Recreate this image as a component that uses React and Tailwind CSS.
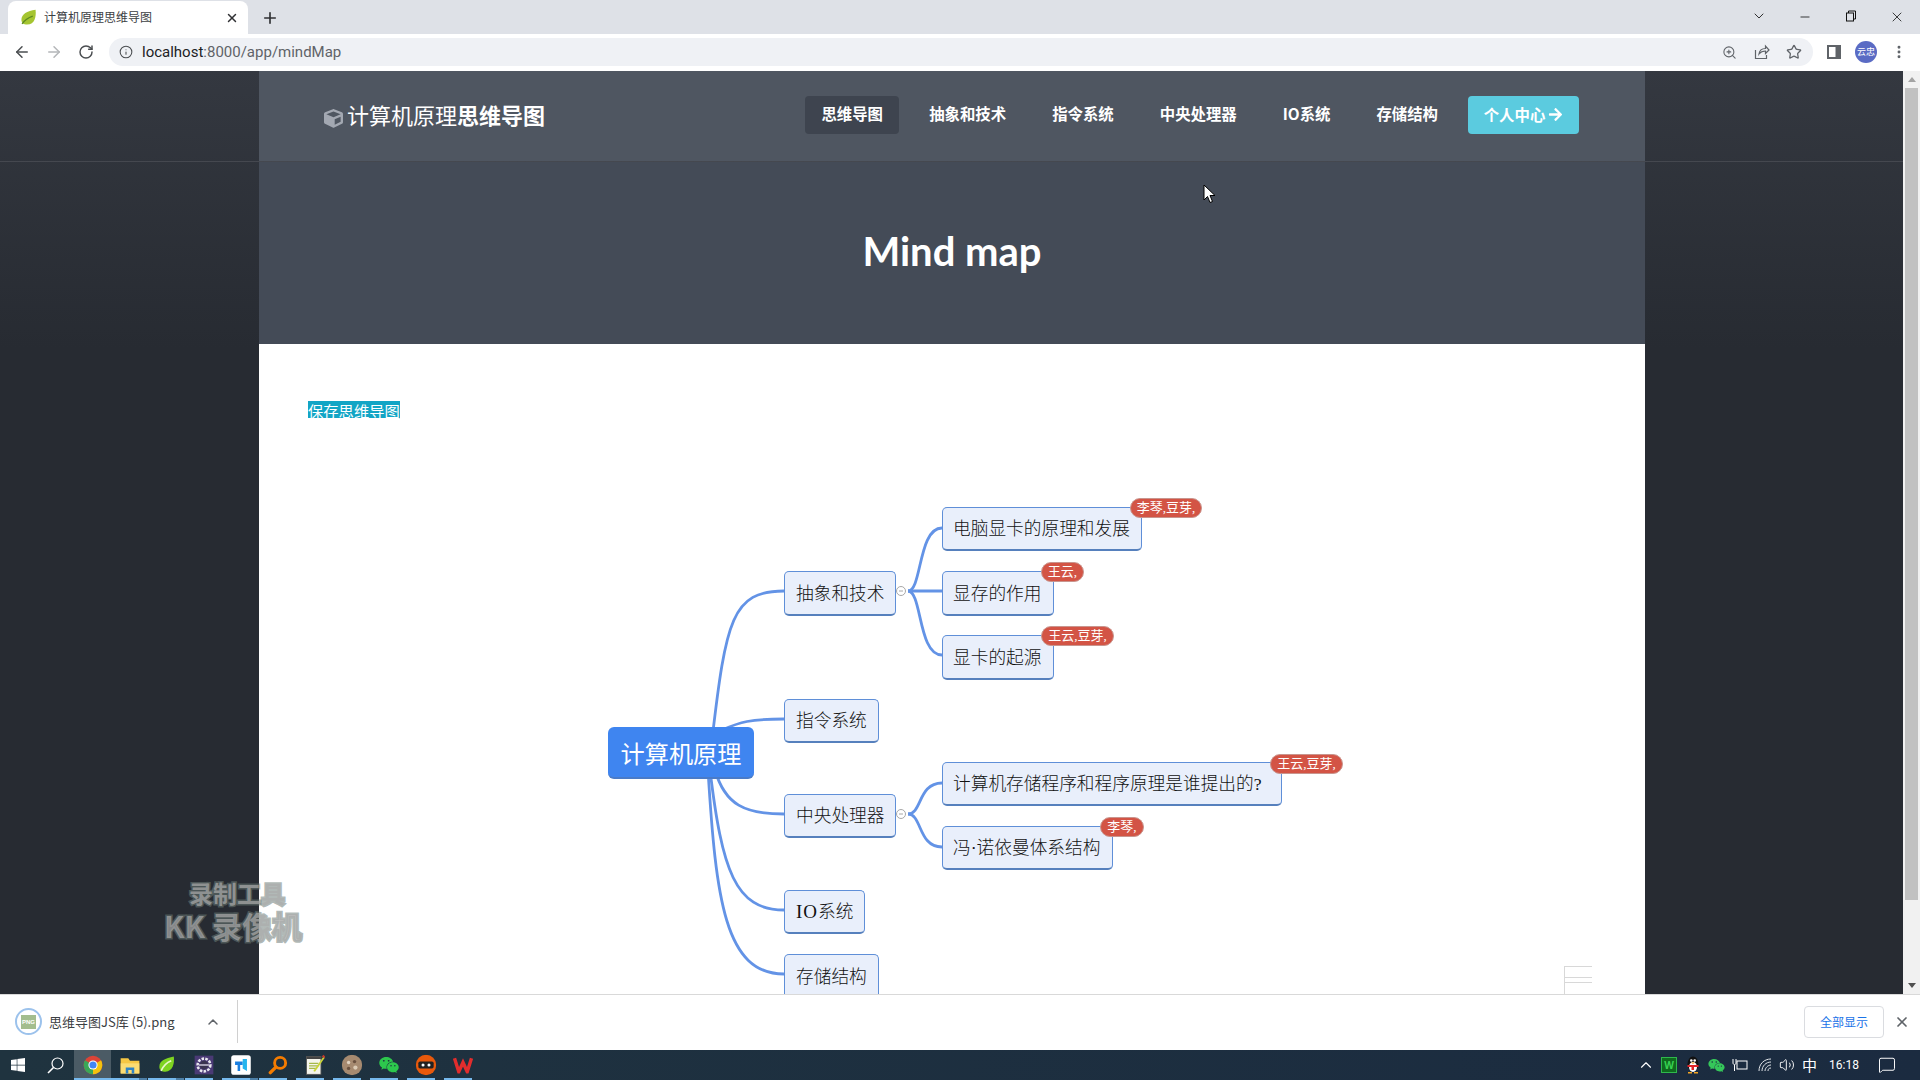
import { ArrowLeft, ArrowRight, RotateCw, Info, ZoomIn, Star, MoreVertical, ChevronDown, ChevronUp, Minus, X, Plus, Volume2, MessageSquare } from 'lucide-react'
import { FaCube, FaArrowRight, FaWindows, FaWeixin } from 'react-icons/fa'

const cjk = 'font-["Noto_Sans_CJK_SC","Noto_Sans",sans-serif]'

const navItems = ['抽象和技术', '指令系统', '中央处理器', 'IO系统', '存储结构']

const nodes = [
    { text: '抽象和技术', pos: 'left-[525px] top-[131px] w-[112px] h-[45px] pl-[11px]' },
    { text: '指令系统', pos: 'left-[525px] top-[259px] w-[95px] h-[44px] pl-[11px]' },
    { text: '中央处理器', pos: 'left-[525px] top-[354px] w-[112px] h-[44px] pl-[11px]' },
    { text: <><span className="text-[19px] tracking-[1px]">IO</span>系统</>, pos: 'left-[525px] top-[450px] w-[81px] h-[44px] pl-[11px]' },
    { text: '存储结构', pos: 'left-[525px] top-[514px] w-[95px] h-[45px] pl-[11px]' },
    { text: '电脑显卡的原理和发展', pos: 'left-[683px] top-[67px] w-[200px] h-[44px] pl-[10px]' },
    { text: '显存的作用', pos: 'left-[683px] top-[131px] w-[112px] h-[45px] pl-[10px]' },
    { text: '显卡的起源', pos: 'left-[683px] top-[195px] w-[112px] h-[45px] pl-[10px]' },
    { text: '计算机存储程序和程序原理是谁提出的?', pos: 'left-[683px] top-[322px] w-[340px] h-[44px] pl-[10px]' },
    { text: '冯·诺依曼体系结构', pos: 'left-[683px] top-[386px] w-[171px] h-[44px] pl-[10px]' },
]

const badges = [
    { text: '李琴,豆芽,', pos: 'left-[871px] top-[58px] w-[72px]' },
    { text: '王云,', pos: 'left-[782px] top-[122px] w-[43px]' },
    { text: '王云,豆芽,', pos: 'left-[782px] top-[186px] w-[73px]' },
    { text: '王云,豆芽,', pos: 'left-[1011px] top-[314px] w-[73px]' },
    { text: '李琴,', pos: 'left-[841px] top-[377px] w-[44px]' },
]

function ChromeLogo() {
    return (
        <svg width="24" height="24" viewBox="0 0 24 24">
            <circle cx="12" cy="12" r="11" fill="#db4437" />
            <path d="M12 12 L21.5 6.5 A11 11 0 0 1 12 23 Z" fill="#f4c20d" />
            <path d="M12 12 L12 23 A11 11 0 0 1 2.5 6.5 Z" fill="#3aa757" />
            <circle cx="12" cy="12" r="5.4" fill="#fff" />
            <circle cx="12" cy="12" r="4.2" fill="#4285f4" />
        </svg>
    )
}

const taskApps = [
    { active: true, icon: <ChromeLogo /> },
    {
        split: true,
        icon: (
            <svg width="24" height="22" viewBox="0 0 24 22">
                <path d="M1 3h9l2 3h11v15H1z" fill="#f6c744" />
                <path d="M1 9h22v12H1z" fill="#fbdc73" />
                <path d="M7 14h10v7h-3v-4h-4v4H7z" fill="#2f83c5" />
            </svg>
        ),
    },
    {
        split: true,
        icon: (
            <svg width="24" height="24" viewBox="0 0 24 24">
                <path d="M3 14C3 7 10 4 20 2c1 8-1 17-10 18-4 0-7-2-7-6z" fill="#7ed321" />
                <path d="M5 19C8 12 12 9 17 7" stroke="#e9f7c9" strokeWidth="2" fill="none" />
            </svg>
        ),
    },
    {
        icon: (
            <svg width="24" height="24" viewBox="0 0 24 24">
                <rect x="1" y="1" width="22" height="22" fill="#4a3a75" />
                <circle cx="12" cy="12" r="7.5" fill="none" stroke="#e8e8ee" strokeWidth="3" strokeDasharray="3 1.5" />
                <circle cx="12" cy="12" r="5" fill="#3a3350" />
                <rect x="6" y="11" width="12" height="2" fill="#b9b3c9" />
            </svg>
        ),
    },
    {
        split: true,
        icon: (
            <svg width="24" height="24" viewBox="0 0 24 24">
                <rect x="0.5" y="0.5" width="23" height="23" rx="3" fill="#fff" />
                <path d="M5 8h9v4h-3v7H8v-7H5z" fill="#1a7fe0" />
                <path d="M14 5h5v14l-5-3z" fill="#25b5ee" />
            </svg>
        ),
    },
    {
        icon: (
            <svg width="24" height="24" viewBox="0 0 24 24" fill="none">
                <circle cx="14.5" cy="9.5" r="6.5" stroke="#f57c00" strokeWidth="3.4" />
                <path d="M9.5 14.5L3 21" stroke="#f57c00" strokeWidth="4" strokeLinecap="round" />
            </svg>
        ),
    },
    {
        icon: (
            <svg width="24" height="26" viewBox="0 0 24 26">
                <rect x="2" y="3" width="17" height="21" fill="#f4f4ec" stroke="#555" />
                <path d="M2 3h17v3H2z" fill="#444" />
                <path d="M5 11h11M5 14h11M5 17h8" stroke="#a5b84a" strokeWidth="1.5" />
                <path d="M10 20L22 3l1.5 1.5L12 21z" fill="#c9d43a" />
                <path d="M20 3l2-2 2 2-1 2z" fill="#c0392b" />
            </svg>
        ),
    },
    {
        icon: (
            <svg width="24" height="24" viewBox="0 0 24 24">
                <circle cx="12" cy="12" r="12" fill="#a68a70" />
                <circle cx="8" cy="9" r="2" fill="#e0d2c0" />
                <circle cx="15" cy="8" r="2" fill="#6b5240" />
                <circle cx="16" cy="15" r="2.5" fill="#dccbb5" />
                <circle cx="8" cy="16" r="2" fill="#6b5240" />
            </svg>
        ),
    },
    { icon: <FaWeixin size={24} color="#2dc84d" /> },
    {
        icon: (
            <svg width="24" height="24" viewBox="0 0 24 24">
                <circle cx="12" cy="12" r="12" fill="#e8590c" />
                <rect x="3" y="8" width="18" height="8" rx="2" fill="#222" />
                <circle cx="8.5" cy="12" r="1.8" fill="#fff" />
                <circle cx="15.5" cy="12" r="1.8" fill="#fff" />
            </svg>
        ),
    },
    {
        icon: (
            <svg width="24" height="20" viewBox="0 0 24 20" fill="none">
                <path d="M2 2l5 16 5-11 5 11 5-16" stroke="#e22d2d" strokeWidth="4" />
            </svg>
        ),
    },
]

function BrowserChrome() {
    return (
        <div className="shrink-0 text-[#5f6368]">
            {/* Tab strip */}
            <div className="h-[34px] bg-[#dee1e7] flex items-end pl-[8px]">
                <div className="w-[240px] h-[33px] bg-white rounded-t-lg flex items-center pl-[12px] pr-[9px]">
                    <svg width="17" height="17" viewBox="0 0 24 24">
                        <path d="M2 15C2 7 10 3 22 1c1 10-1 21-12 21-5 0-8-3-8-7z" fill="#a5c531" />
                        <path d="M3 21C7 15 12 12 18 10" stroke="#5c8a20" strokeWidth="2" fill="none" />
                    </svg>
                    <span className={`ml-[7px] mb-[1px] text-[12px] text-[#3c4043] ${cjk}`}>计算机原理思维导图</span>
                    <X size={14} strokeWidth={2.5} className="ml-auto text-[#303134]" />
                </div>
                <Plus size={18} strokeWidth={2.2} className="ml-[13px] mb-[7px] text-[#303134]" />
                <ChevronDown size={16} strokeWidth={1.4} className="ml-auto mb-[10px] text-[#222]" />
                <div className="w-[46px] flex justify-center ml-[15px] mb-[10px]"><Minus size={14} strokeWidth={1.4} className="text-[#111]" /></div>
                <div className="w-[46px] flex justify-center mb-[12px]">
                    <svg width="12" height="12" viewBox="0 0 12 12" fill="none" stroke="#111">
                        <rect x="1.5" y="3" width="7" height="8" />
                        <path d="M3.5 3V1h7v8H8.5" />
                    </svg>
                </div>
                <div className="w-[46px] flex justify-center mb-[9px]"><X size={16} strokeWidth={1.2} className="text-[#111]" /></div>
            </div>
            {/* Toolbar */}
            <div className="h-[37px] bg-white flex items-center pl-[13px] pb-[1px]">
                <ArrowLeft size={18} strokeWidth={2} className="text-[#4a4d50]" />
                <ArrowRight size={18} strokeWidth={2} className="ml-[14px] text-[#b4b6b9]" />
                <RotateCw size={16} strokeWidth={2.2} className="ml-[15px] text-[#4a4d50]" />
                <div className="ml-[15px] w-[1704px] h-[28px] rounded-full bg-[#eff1f5] flex items-center pl-[10px] pr-[11px]">
                    <Info size={14} strokeWidth={1.8} className="text-[#4a4d50]" />
                    <span className="ml-[9px] text-[15px] text-[#5f6368] font-['Roboto',sans-serif]">
                        <span className="text-[#202124]">localhost</span>:8000/app/mindMap
                    </span>
                    <ZoomIn size={15} strokeWidth={1.7} className="ml-auto mr-[17px] text-[#5f6368]" />
                    <svg width="16" height="16" viewBox="0 0 16 16" fill="none" stroke="#5f6368" strokeWidth="1.2" className="mr-[16px]">
                        <path d="M1.5 6v8.5h11V11" />
                        <path d="M5 10c.5-4 3-5.500 6.500-5.500V2L15 6l-3.500 3.500V7C8.500 7 6.500 8 5 10z" />
                    </svg>
                    <Star size={16} strokeWidth={1.9} className="text-[#5f6368]" />
                </div>
                <svg width="14" height="14" viewBox="0 0 14 14" className="ml-[14px]">
                    <rect x="0" y="0" width="14" height="14" fill="#5f6368" />
                    <rect x="2" y="2" width="6.500" height="10" fill="#fff" />
                </svg>
                <div className={`ml-[14px] w-[22px] h-[22px] rounded-full bg-[#5a6bc4] text-white text-[9px] flex items-center justify-center ${cjk}`}>云忠</div>
                <MoreVertical size={16} strokeWidth={2.4} className="ml-[14px] text-[#5f6368]" />
            </div>
        </div>
    )
}

function NavBar() {
    return (
        <div className="h-[91px] shrink-0 border-b border-white/10">
            <div className={`ml-[259px] w-[1386px] h-full bg-[#4f5661] flex items-start text-white ${cjk}`}>
                <div className="ml-[65px] mt-[20px] flex items-center h-[52px]">
                    <FaCube size={19} className="text-[#a3a8b2] mt-[2px]" />
                    <span className="ml-[4px] mb-[7px] text-[22px] leading-none font-normal">计算机原理<span className="font-bold">思维导图</span></span>
                </div>
                <nav className="ml-auto mr-[66px] mt-[25px] flex items-center gap-[14px] text-[15.4px] font-bold">
                    <a className="h-[38px] w-[94px] pb-[2px] rounded bg-[#3e444f] flex items-center justify-center">思维导图</a>
                    {navItems.map((item) => (
                        <a key={item} className="h-[38px] px-4 pb-[2px] flex items-center">{item}</a>
                    ))}
                    <button className="h-[38px] w-[111px] pb-[1px] rounded bg-[#5bcbdf] flex items-center justify-center gap-[3px] font-bold">
                        个人中心 <FaArrowRight size={15} />
                    </button>
                </nav>
            </div>
        </div>
    )
}

function MindMap() {
    return (
        <div className="relative h-[554px] overflow-hidden">
            <svg viewBox="259 440 1386 554" className="absolute inset-0 w-full h-full" fill="none" stroke="#6393e6" strokeWidth="2.8">
                <path d="M712 740C726 620 732 591 784 591" />
                <path d="M722 730C740 722 750 719 784 719" />
                <path d="M715 770C725 805 745 814 784 814" />
                <path d="M710 770C722 870 735 910 784 910" />
                <path d="M708 770C716 900 725 974 784 974" />
                <path d="M908 591C922 591 918 528 942 528" />
                <path d="M908 591H942" />
                <path d="M908 591C922 591 918 655 942 655" />
                <path d="M908 814C922 814 918 783 942 783" />
                <path d="M908 814C922 814 918 847 942 847" />
                <g stroke="#a8a8a8" strokeWidth="1" fill="#fff">
                    <circle cx="901" cy="591" r="4.500" />
                    <circle cx="901" cy="814" r="4.500" />
                    <path d="M899 591h4M899 814h4" />
                </g>
            </svg>
            <div className="absolute left-[349px] top-[287px] w-[146px] h-[52px] pt-[6px] rounded-md bg-[#3f85f0] border-b-2 border-[#4a7bc8] text-white text-[24.2px] flex items-center justify-center font-['Liberation_Serif','Noto_Sans_CJK_SC',serif]">
                计算机原理
            </div>
            {nodes.map((n) => (
                <div key={n.pos} className={`absolute ${n.pos} rounded-[5px] bg-[#e9effb] border border-[#5f8fd8] border-b-2 border-b-[#5680bd] pt-[2px] flex items-center text-[17.7px] font-light text-[#111] font-['Liberation_Serif','Noto_Sans_CJK_SC',serif]`}>
                    <span>{n.text}</span>
                </div>
            ))}
            {badges.map((b) => (
                <div key={b.pos} className={`absolute ${b.pos} h-[20px] rounded-full bg-[#d35445] border border-[#c9958e] text-white text-[13px] flex items-center justify-center font-['Liberation_Serif','Noto_Sans_CJK_SC',serif]`}>
                    {b.text}
                </div>
            ))}
        </div>
    )
}

function Page() {
    return (
        <div className="relative flex-1 h-full flex flex-col overflow-hidden bg-linear-to-b from-[#343840] to-[#272b32] to-[30%]">
            <NavBar />
            <div className="ml-[259px] w-[1386px] h-[182px] shrink-0 bg-[#444b57] flex justify-center pt-[59px]">
                <h1 className="text-[40px] leading-[60px] font-bold text-white font-['Lato',sans-serif]">Mind map</h1>
            </div>
            <div className="relative ml-[259px] w-[1386px] flex-1 bg-white">
                <div className="h-[96px] pl-[49px] pt-[57px]">
                    <a className={`block w-fit h-[18px] pt-[1px] leading-[16px] text-[15.3px] text-white underline bg-[#12a5c5] ${cjk}`}>保存思维导图</a>
                </div>
                <MindMap />
                {/* minimap widget, bottom right */}
                <div className="absolute left-[1305px] bottom-0 w-[28px] h-[28px] border-l border-t border-[#d8d8d8] flex flex-col justify-between">
                    <div className="h-[11px] border-b border-[#d8d8d8]" />
                    <div className="h-[12px] border-t border-[#d8d8d8]" />
                </div>
            </div>
            {/* recorder watermark */}
            <div className={`absolute left-[163px] top-[807px] w-[140px] flex flex-col items-center font-bold text-[#acacac]/70 [paint-order:stroke] [-webkit-text-stroke:3px_rgba(110,125,120,0.55)] ${cjk}`}>
                <span className="ml-[8px] text-[24px] leading-[30px]">录制工具</span>
                <span className="text-[30px] leading-[34px] whitespace-nowrap">KK 录像机</span>
            </div>
            {/* mouse pointer */}
            <svg width="13" height="20" viewBox="0 0 13 20" className="absolute left-[1203px] top-[113px]">
                <path d="M1 1v15l3.500-3.500 2.500 6 2.500-1-2.500-6h5z" fill="#fff" stroke="#000" />
            </svg>
        </div>
    )
}

function Scrollbar() {
    return (
        <div className="w-[17px] h-full shrink-0 bg-[#f1f1f1] flex flex-col items-center">
            <div className="h-[17px] flex items-center justify-center">
                <div className="w-0 h-0 border-x-[4px] border-x-transparent border-b-[5px] border-b-[#a3a3a3]" />
            </div>
            <div className="w-[13px] h-[812px] bg-[#c1c1c1]" />
            <div className="mt-auto h-[17px] flex items-center justify-center">
                <div className="w-0 h-0 border-x-[4px] border-x-transparent border-t-[5px] border-t-[#505050]" />
            </div>
        </div>
    )
}

function DownloadShelf() {
    return (
        <div className={`h-[56px] shrink-0 bg-white border-t border-[#d9d9d9] flex items-center pb-[2px] ${cjk}`}>
            <div className="ml-[15px] w-[27px] h-[27px] rounded-full border-2 border-[#9cc2ec] flex items-center justify-center">
                <div className="w-[15px] h-[14px] bg-[#a3bd8e] text-white text-[6px] font-bold leading-[14px] text-center font-['Liberation_Sans',sans-serif]">PNG</div>
            </div>
            <span className="ml-[7px] text-[13px] text-[#3c4043]">思维导图JS库 (5).png</span>
            <ChevronUp size={16} strokeWidth={2.2} className="ml-[30px] text-[#5f6368]" />
            <div className="ml-[16px] w-px h-[43px] bg-[#d0d0d0]" />
            <button className="ml-auto w-[80px] h-[32px] rounded border border-[#dadce0] text-[12px] text-[#1a73e8]">全部显示</button>
            <X size={16} strokeWidth={2.6} className="ml-[10px] mr-[10px] text-[#5f6368]" />
        </div>
    )
}

function Penguin() {
    return (
        <svg width="16" height="18" viewBox="0 0 16 18">
            <ellipse cx="8" cy="8" rx="5.500" ry="7.500" fill="#111" />
            <ellipse cx="8" cy="11" rx="4" ry="5" fill="#fff" />
            <circle cx="6.300" cy="4.500" r="1.300" fill="#fff" />
            <circle cx="9.700" cy="4.500" r="1.300" fill="#fff" />
            <path d="M6 6.500h4L8 8z" fill="#f5a623" />
            <path d="M2.500 9h11v2H9v3H6.500v-3h-4z" fill="#e0262a" />
            <path d="M3 16h4v1.500H3zM9 16h4v1.500H9z" fill="#f5a623" />
        </svg>
    )
}

function Taskbar() {
    return (
        <div className="h-[30px] shrink-0 bg-linear-to-r from-[#1f333f] to-[#1b2b40] flex items-center text-white">
            <div className="w-[36px] flex justify-center"><FaWindows size={16} /></div>
            <div className="w-[38px] flex justify-center">
                <svg width="17" height="17" viewBox="0 0 17 17" fill="none" stroke="#fff" strokeWidth="1.200">
                    <circle cx="10.500" cy="6.500" r="5.500" />
                    <path d="M6.500 10.500L1 16" strokeWidth="1.600" />
                </svg>
            </div>
            {taskApps.map((app, i) => (
                <div key={i} className={`relative w-[37px] h-full flex items-center justify-center ${app.active ? 'bg-white/20' : ''}`}>
                    <div className="scale-[0.85]">{app.icon}</div>
                    <div className={`absolute bottom-0 h-[2px] bg-[#76b9ed] left-0 ${app.active ? 'right-0' : 'right-[9px]'}`} />
                    {app.split && <div className="absolute bottom-0 h-[2px] bg-[#4d7fa6] left-[28px] right-[1px]" />}
                </div>
            ))}
            <div className="ml-auto flex items-center">
                <ChevronUp size={18} strokeWidth={1.5} />
                <div className="ml-[6px] w-[16px] h-[16px] bg-[#0f6a1e] border border-[#2fb84c] text-[10px] font-bold text-[#39d353] flex items-center justify-center">W</div>
                <div className="ml-[8px]"><Penguin /></div>
                <FaWeixin size={17} color="#35c75a" className="ml-[7px]" />
                <svg width="16" height="14" viewBox="0 0 16 14" fill="none" stroke="#fff" className="ml-[7px]">
                    <rect x="5" y="3" width="10" height="8" />
                    <path d="M1 1v4c0 2 3 2 3 0V1M2.500 7v6" />
                </svg>
                <svg width="14" height="14" viewBox="0 0 14 14" fill="none" stroke="#dfe3e8" className="ml-[10px]">
                    <path d="M1 13C1 6 6 1 13 1M4 13c0-5 4-9 9-9M7 13c0-3 3-6 6-6M10 13c0-2 1-3 3-3" />
                </svg>
                <Volume2 size={16} strokeWidth={1.4} className="ml-[7px]" />
                <span className={`ml-[7px] text-[15px] ${cjk}`}>中</span>
                <span className="ml-[12px] text-[12px] font-['Roboto',sans-serif]">16:18</span>
                <MessageSquare size={18} strokeWidth={1.3} className="ml-[19px] mr-[24px]" />
            </div>
        </div>
    )
}

export default function App() {
    return (
        <div className="w-[1920px] h-[1080px] overflow-hidden flex flex-col">
            <BrowserChrome />
            <div className="flex-1 min-h-0 flex">
                <Page />
                <Scrollbar />
            </div>
            <DownloadShelf />
            <Taskbar />
        </div>
    )
}
